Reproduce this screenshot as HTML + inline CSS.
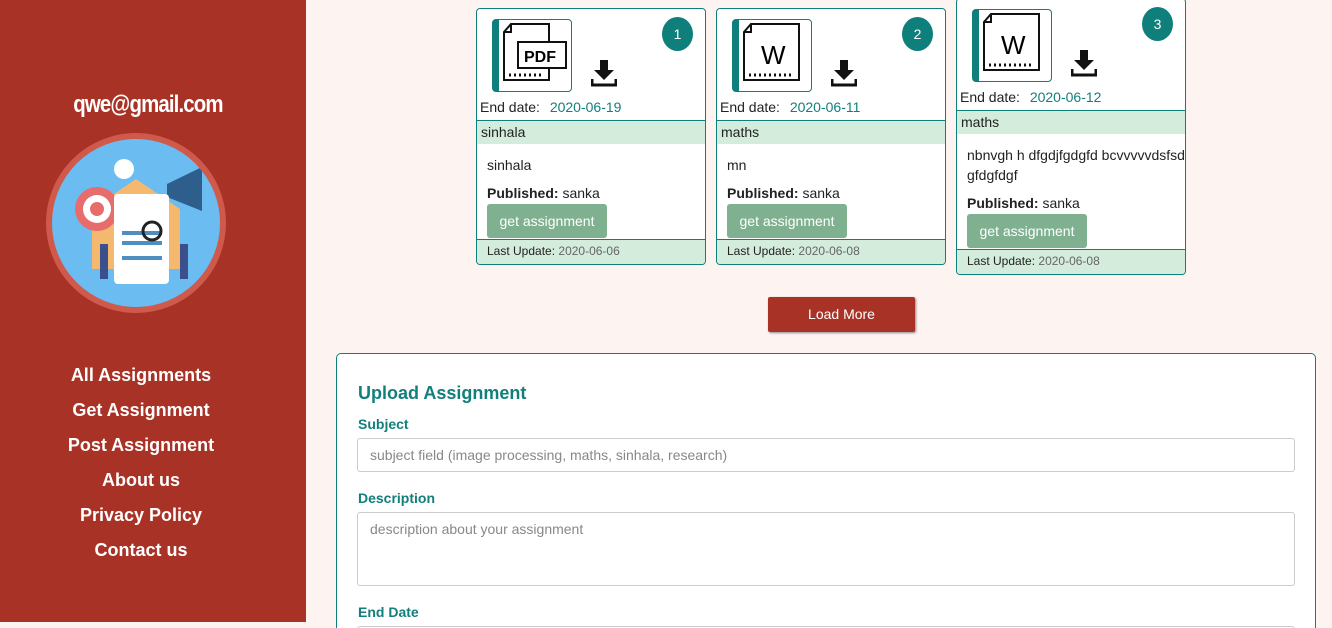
<!DOCTYPE html><html><head><style>
*{box-sizing:border-box}html{overflow:hidden;height:628px}body{margin:0;width:1332px;height:628px;overflow:hidden;background:#fdf3f1;font-family:"Liberation Sans",sans-serif;position:relative}
.side{position:absolute;left:0;top:0;width:306px;height:622px;background:#a93226;color:#fff;text-align:center}
.side .em{position:absolute;top:91px;left:0;width:296px;font:bold 24px "Liberation Sans",sans-serif;letter-spacing:-1px;transform:scaleX(0.85)}
.avatar{position:absolute;left:46px;top:133px;width:180px;height:180px;border-radius:50%;background:#6bbcf1;border:6px solid #cf5a4c;overflow:hidden}
.nav{position:absolute;top:364px;left:0;width:282px}.nav div{font-weight:bold;font-size:18px;height:35px;line-height:22px}
.card{position:absolute;width:230px;height:257px;background:#fff;border:1px solid #0f7f7c;border-radius:4px;font-size:14px;color:#222;overflow:hidden}
.ib{position:absolute;left:15px;top:10px;width:80px;height:73px;border:1px solid #0f7f7c;border-left:7px solid #0f7f7c;border-radius:4px}
.badge{position:absolute;right:12px;top:8px;width:31px;height:34px;border-radius:50%;background:#0e7f7b;color:#fff;text-align:center;line-height:34px;font-size:14px}
.dl{position:absolute;left:114px;top:51px}
.ed{position:absolute;left:3px;top:90px}.ed span{color:#127f7d;margin-left:6px}
.sub{position:absolute;left:0;right:0;top:111px;height:24px;background:#d3ecdc;border-top:1px solid #0f7f7c;padding:3px 4px}
.desc{position:absolute;left:10px;top:146px;width:250px;line-height:20px}
.pub{position:absolute;left:10px;top:176px}
.btn{position:absolute;left:10px;top:195px;width:120px;height:34px;background:#7fb191;color:#fff;border-radius:3px;text-align:center;line-height:34px;font-size:14px}
.ft{position:absolute;left:0;right:0;bottom:0;height:25px;background:#d3ecdc;border-top:1px solid #0f7f7c;font-size:12px;padding:4px 10px}.ft span{color:#666}
.lm{position:absolute;left:768px;top:297px;width:147px;height:35px;background:#a93226;color:#fff;border-radius:2px;box-shadow:1px 1px 2px #888;text-align:center;line-height:35px;font-size:14px}
.form{position:absolute;left:336px;top:353px;width:980px;height:275px;background:#fff;border:1px solid #0f7f7c;border-bottom:none;border-radius:5px 5px 0 0;overflow:hidden}
.form h2{position:absolute;left:21px;top:29px;margin:0;font-size:18px;color:#127f7b}
.lb{position:absolute;left:21px;font-size:14px;font-weight:bold;color:#127f7b}
.in{position:absolute;left:20px;width:938px;border:1px solid #ccc;border-radius:3px;color:#888;font-size:14px;padding:8px 12px}
</style></head><body>
<div class="side"><div class="em">qwe@gmail.com</div>
<div class="avatar"><svg width="168" height="168" viewBox="0 0 168 168"><path d="M40 70 L84 40 L128 70 L128 130 L40 130Z" fill="#f4b96e"/><circle cx="45" cy="70" r="22" fill="#e76c6c"/><circle cx="45" cy="70" r="14" fill="#fff"/><circle cx="45" cy="70" r="7" fill="#e76c6c"/><path d="M115 45 L150 28 L150 72 L115 58Z" fill="#2e5f8c"/><circle cx="72" cy="30" r="10" fill="#fff"/><rect x="62" y="55" width="55" height="90" rx="4" fill="#fff"/><rect x="70" y="92" width="40" height="4" fill="#4e8fbf"/><rect x="70" y="102" width="40" height="4" fill="#4e8fbf"/><rect x="70" y="117" width="40" height="4" fill="#4e8fbf"/><circle cx="100" cy="92" r="9" fill="none" stroke="#222" stroke-width="3"/><rect x="48" y="105" width="8" height="35" fill="#3b4f8c"/><rect x="128" y="105" width="8" height="35" fill="#3b4f8c"/></svg></div>
<div class="nav"><div>All Assignments</div><div>Get Assignment</div><div>Post Assignment</div><div>About us</div><div>Privacy Policy</div><div>Contact us</div></div></div>

<div class="card" style="left:476px;top:8px"><div class="ib"><svg width="72" height="71" viewBox="0 0 72 71"><path d="M12 4 H50 V60 H5 V12Z M5 12 H12 V4" fill="none" stroke="#111" stroke-width="2"/><rect x="19" y="22" width="48" height="26" fill="#fff" stroke="#111" stroke-width="2"/><text x="25" y="42" font-size="16" font-family="Liberation Sans" font-weight="bold">PDF</text><path d="M10 55 H45" stroke="#111" stroke-width="3" stroke-dasharray="2 3"/></svg></div><div class="badge">1</div>
<svg class="dl" width="26" height="27" viewBox="0 0 26 27"><path d="M9 0h8v10h6L13 20 3 10h6z" fill="#111"/><path d="M1 19v6h24v-6" fill="none" stroke="#111" stroke-width="3"/></svg>
<div class="ed">End date: <span>2020-06-19</span></div><div class="sub">sinhala</div><div class="desc">sinhala</div><div class="pub"><b>Published:</b> sanka</div><div class="btn">get assignment</div><div class="ft">Last Update: <span>2020-06-06</span></div></div>

<div class="card" style="left:716px;top:8px"><div class="ib"><svg width="72" height="71" viewBox="0 0 72 71"><path d="M12 4 H60 V60 H5 V12Z M5 12 H12 V4" fill="none" stroke="#111" stroke-width="2"/><text x="22" y="44" font-size="26" font-family="Liberation Sans">W</text><path d="M10 55 H55" stroke="#111" stroke-width="3" stroke-dasharray="2 3"/></svg></div><div class="badge">2</div>
<svg class="dl" width="26" height="27" viewBox="0 0 26 27"><path d="M9 0h8v10h6L13 20 3 10h6z" fill="#111"/><path d="M1 19v6h24v-6" fill="none" stroke="#111" stroke-width="3"/></svg>
<div class="ed">End date: <span>2020-06-11</span></div><div class="sub">maths</div><div class="desc">mn</div><div class="pub"><b>Published:</b> sanka</div><div class="btn">get assignment</div><div class="ft">Last Update: <span>2020-06-08</span></div></div>

<div class="card" style="left:956px;top:-2px;height:277px"><div class="ib"><svg width="72" height="71" viewBox="0 0 72 71"><path d="M12 4 H60 V60 H5 V12Z M5 12 H12 V4" fill="none" stroke="#111" stroke-width="2"/><text x="22" y="44" font-size="26" font-family="Liberation Sans">W</text><path d="M10 55 H55" stroke="#111" stroke-width="3" stroke-dasharray="2 3"/></svg></div><div class="badge">3</div>
<svg class="dl" width="26" height="27" viewBox="0 0 26 27"><path d="M9 0h8v10h6L13 20 3 10h6z" fill="#111"/><path d="M1 19v6h24v-6" fill="none" stroke="#111" stroke-width="3"/></svg>
<div class="ed">End date: <span>2020-06-12</span></div><div class="sub">maths</div><div class="desc">nbnvgh h dfgdjfgdgfd bcvvvvvdsfsd<br>gfdgfdgf</div><div class="pub" style="top:196px"><b>Published:</b> sanka</div><div class="btn" style="top:215px">get assignment</div><div class="ft">Last Update: <span>2020-06-08</span></div></div>

<div class="lm">Load More</div>
<div class="form"><h2>Upload Assignment</h2>
<div class="lb" style="top:62px">Subject</div><div class="in" style="top:84px;height:34px">subject field (image processing, maths, sinhala, research)</div>
<div class="lb" style="top:136px">Description</div><div class="in" style="top:158px;height:74px">description about your assignment</div>
<div class="lb" style="top:250px">End Date</div><div class="in" style="top:272px;height:34px"></div></div>
</body></html>
